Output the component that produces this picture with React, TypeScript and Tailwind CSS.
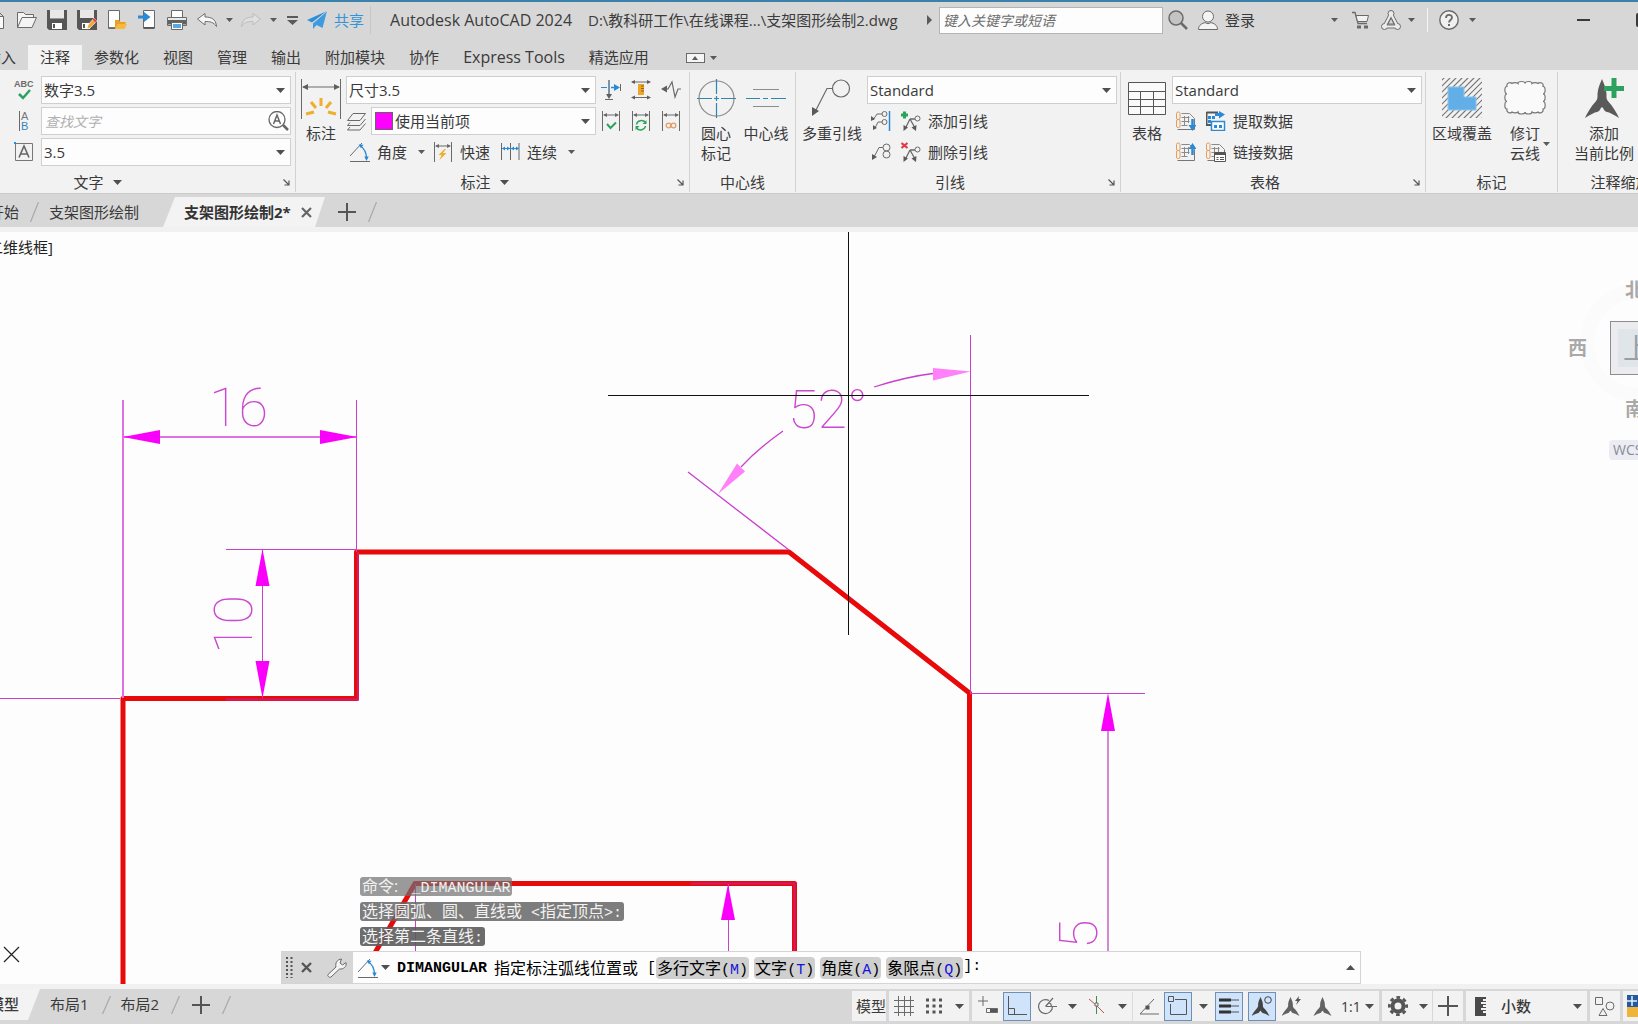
import React from "react";

type Kids = { children?: React.ReactNode };

function Ic({ s = 20, v, children }: Kids & { s?: number; v?: number }) {
  const b = v ?? s;
  return (
    <svg width={s} height={s} viewBox={`0 0 ${b} ${b}`} fill="none" stroke="#6a6a6a" strokeWidth="1" className="shrink-0">
      {children}
    </svg>
  );
}

function Caret({ big }: { big?: boolean }) {
  return big ? (
    <svg width="9" height="5" className="shrink-0"><path d="M0 0h9L4.500 5z" fill="#4f4f4f" /></svg>
  ) : (
    <svg width="7" height="4" className="shrink-0"><path d="M0 0h7L3.500 4z" fill="#5a5a5a" /></svg>
  );
}

function QBtn({ label, w = "w-[30px]", children }: Kids & { label: string; w?: string }) {
  return (
    <button aria-label={label} className={`flex h-6 shrink-0 items-center justify-center ${w}`}>
      {children}
    </button>
  );
}

/* ---------- shared icons ---------- */

const Arrows = () => (
  <>
    <path d="M1.500 0v20M18.500 0v20" />
    <path d="M3 4h14" />
    <path d="M2 4l4-2v4zM18 4l-4-2v4z" fill="#6a6a6a" stroke="none" />
  </>
);

const AngleIcon = () => (
  <Ic>
    <path d="M0 19.500h20M0 14L12 1" />
    <path d="M10 3.500C14 6 16.500 11 16.500 17" stroke="#2b8ad6" strokeWidth="1.300" />
    <path d="M8.500 2.500l5 .3-2.500 3.400zM16.500 19l-2.200-4.500h4.400z" fill="#2b8ad6" stroke="none" />
  </Ic>
);

const Prop = ({ c = "#626262" }: { c?: string }) => (
  <path
    d="M10 0C10.800 2 12.300 4.500 12.500 7.500C12.500 9.500 12.300 10 13.500 11.500C16 14 18 17 19.500 20C16.500 18.300 14.500 17.200 12.300 16.800C11 16.500 10.800 14.500 10 14.500C9.200 14.500 9 16.500 7.700 16.800C5.500 17.200 3.500 18.300 .5 20C2 17 4 14 6.500 11.500C7.700 10 7.500 9.500 7.500 7.500C7.700 4.500 9.200 2 10 0z"
    fill={c}
    stroke="none"
  />
);

const LeaderPair = () => (
  <>
    <path d="M4 18L9 8M9 8l5 9M9 8h5" strokeWidth="1.300" />
    <circle cx="16.500" cy="7.500" r="2.500" />
    <path d="M2.500 20l0-6 4.500 2.500zM15 20l.5-6-5 2.500z" fill="#5a5a5a" stroke="none" />
  </>
);

/* ---------- title bar ---------- */

function TitleBar() {
  return (
    <header className="flex h-[38px] shrink-0 items-center overflow-hidden whitespace-nowrap border-t-2 border-[#3b82aa] pl-0">
      <div className="-ml-[18px] flex shrink-0 items-center">
        <QBtn label="新建"><Ic><path d="M3.500 1.500h8l5 5v12h-13zM11.500 1.500v5h5" fill="#fafafa" /></Ic></QBtn>
        <QBtn label="打开">
          <Ic><path d="M.5 17.500V2.500h6l2 2h8v3M.5 17.500L5 7.500h14.500L15 17.500z" fill="#f4f4f4" /></Ic>
        </QBtn>
        <QBtn label="保存">
          <Ic><path d="M0 0h20v20H2l-2-2z" fill="#565656" stroke="none" /><path d="M3 0h14v8H3z" fill="#e8e8e8" stroke="none" /><path d="M3 8h14v1H3z" fill="#999" stroke="none" /><path d="M5 13h10v6H5z" fill="#fff" stroke="none" /><path d="M6 14h2v4H6z" fill="#565656" stroke="none" /></Ic>
        </QBtn>
        <QBtn label="另存为">
          <Ic><path d="M0 0h20v20H2l-2-2z" fill="#565656" stroke="none" /><path d="M3 0h14v8H3z" fill="#e8e8e8" stroke="none" /><path d="M5 13h8v6H5z" fill="#fff" stroke="none" /><path d="M6 14h2v4H6z" fill="#565656" stroke="none" /><path d="M17 8l3 3-7 7-3 1 1-4z" fill="#f2a93b" stroke="#fff" strokeWidth=".6" /><path d="M17 8l3 3-1.500 1.500-3-3z" fill="#e0435c" stroke="none" /></Ic>
        </QBtn>
        <QBtn label="从 Web 和 Mobile 中打开">
          <Ic><path d="M1.500.5h11v18h-11z" fill="#fdfdfd" /><path d="M2 17h10v1H2z" fill="#777" stroke="none" /><path d="M8 10h4l1.500 2H19l-2.500 7H8z" fill="#e9a21f" stroke="none" /><path d="M8 19l2.500-5H20l-2.500 5z" fill="#f5b941" stroke="none" /></Ic>
        </QBtn>
        <QBtn label="保存到 Web 和 Mobile">
          <Ic><path d="M6.500.5h11v18h-11z" fill="#fdfdfd" /><path d="M7 17h10v1.500H7z" fill="#555" stroke="none" /><path d="M1 7h8" stroke="#2b8ad6" strokeWidth="3" /><path d="M7 2l6.500 5L7 12z" fill="#2b8ad6" stroke="none" /></Ic>
        </QBtn>
        <QBtn label="打印">
          <Ic><path d="M4.500.5h11v7h-11z" fill="#fff" /><path d="M.5 7.500h19v8H.5z" fill="#e9e9e9" /><path d="M1 10h18v4.500H1z" fill="#626262" stroke="none" /><path d="M4.500 12.500h11v7h-11z" fill="#fff" /><path d="M6 14h8v4H6z" fill="#59a9df" stroke="none" /></Ic>
        </QBtn>
        <QBtn label="放弃"><Ic><path d="M.5 9L8 3.500V7c6 0 11 2 11.500 9.500C16.500 12 13 11.500 8 11.500v3.500z" fill="#f6f6f6" stroke="#6e6e6e" /></Ic></QBtn>
        <QBtn label="放弃列表" w="w-[14px]"><Caret /></QBtn>
        <QBtn label="重做"><Ic><path d="M19.500 9L12 3.500V7C6 7 1 9 .5 16.500C3.500 12 7 11.500 12 11.500v3.500z" fill="#dfdfdf" stroke="#bcbcbc" /></Ic></QBtn>
        <QBtn label="重做列表" w="w-[15px]"><Caret /></QBtn>
        <QBtn label="自定义快速访问工具栏" w="w-[22px]">
          <svg width="11" height="9"><path d="M0 0h11v2H0zM0 4h11L5.500 9z" fill="#5a5a5a" /></svg>
        </QBtn>
      </div>
      <button className="ml-[4px] flex shrink-0 items-center gap-[7px] text-[15px] text-[#3594d8]">
        <Ic><path d="M20 1L0 10l5 2.500z" fill="#2f8fd6" stroke="none" /><path d="M20 1L6 13.200V19l3.500-4 6 3z" fill="#3d9bdf" stroke="none" /><path d="M20 1L6 13" stroke="#d7d7d7" strokeWidth=".8" /></Ic>
        共享
      </button>
      <div className="mx-[6px] h-7 w-px shrink-0 bg-[#c6c6c6]" />
      <h1 className="ml-[13px] flex w-[537px] shrink-0 items-center gap-4 text-[16px] text-[#3c3c3c]">
        <span>Autodesk AutoCAD 2024</span>
        <span className="text-[15px]">D:\教科研工作\在线课程...\支架图形绘制2.dwg</span>
      </h1>
      <svg width="5" height="10" className="shrink-0"><path d="M0 0v10l5-5z" fill="#5a5a5a" /></svg>
      <input
        aria-label="搜索"
        placeholder="键入关键字或短语"
        className="ml-[7px] h-[27px] w-[224px] shrink-0 border border-[#b4b4b4] bg-[#fdfdfd] px-[3px] text-[14px] italic outline-none placeholder:text-[#6d6d6d]"
      />
      <QBtn label="搜索按钮">
        <Ic><circle cx="8" cy="8" r="7" fill="#c4c4c4" strokeWidth="1.500" /><path d="M13 13l6 6" strokeWidth="2.500" /></Ic>
      </QBtn>
      <button className="flex shrink-0 items-center gap-[7px] pl-[5px] text-[15px]">
        <Ic><circle cx="10" cy="6.500" r="5.500" fill="#f4f4f4" /><path d="M.5 19.500c0-5 4-6 6.500-7 2 1.500 4 1.500 6 0 2.500 1 6.500 2 6.500 7z" fill="#f4f4f4" /></Ic>
        登录
      </button>
      <QBtn label="登录选项" w="ml-[67px] w-[24px]"><Caret /></QBtn>
      <QBtn label="购物车" w="w-[30px]">
        <Ic s={18} v={18}><path d="M0 1.500h3l3 11h9" strokeWidth="1.300" /><path d="M4 4.500h12.500L15 10.500H5.500z" fill="#f2f2f2" /><path d="M5 14.500h4v3H5zM12 14.500h4v3h-4z" fill="#6a6a6a" stroke="none" /></Ic>
      </QBtn>
      <QBtn label="Autodesk App Store" w="w-[30px]">
        <Ic>
          <path d="M10 4L3.500 16.500h13z" stroke="#707070" strokeWidth="4" strokeLinejoin="round" />
          <circle cx="10" cy="3.500" r="3" fill="#ececec" />
          <circle cx="3.500" cy="16.500" r="3" fill="#ececec" />
          <circle cx="16.500" cy="16.500" r="3" fill="#ececec" />
          <path d="M10 4L3.500 16.500h13z" stroke="#ececec" strokeWidth="2.200" strokeLinejoin="round" />
          <path d="M10 8L7 14h6z" fill="#d7d7d7" />
        </Ic>
      </QBtn>
      <QBtn label="应用选项" w="w-[10px]"><Caret /></QBtn>
      <div className="mr-[3px] ml-[11px] h-6 w-px shrink-0 bg-[#f4f4f4]" />
      <QBtn label="帮助" w="w-[36px]">
        <Ic><circle cx="10" cy="10" r="9.200" fill="#f0f0f0" strokeWidth="1.400" /><path d="M7 8c0-4 6-4 6-.5 0 2.500-3 2.500-3 5" strokeWidth="1.800" /><path d="M9 14h2v2H9z" fill="#6a6a6a" stroke="none" /></Ic>
      </QBtn>
      <QBtn label="帮助选项" w="w-[10px]"><Caret /></QBtn>
      <QBtn label="最小化" w="ml-auto w-[40px]"><span className="h-[2px] w-[13px] bg-[#3a3a3a]" /></QBtn>
      <QBtn label="最大化" w="-mr-[12px] ml-[27px] w-[20px]">
        <span className="ml-[5px] size-[14px] rounded-[2px] border-2 border-[#3a3a3a]" />
      </QBtn>
    </header>
  );
}

/* ---------- ribbon tabs ---------- */

function RibbonTabs() {
  const tabs = ["插入", "注释", "参数化", "视图", "管理", "输出", "附加模块", "协作", "Express Tools", "精选应用"];
  const style = (t: string) => {
    if (t === "注释") return "bg-[#f3f3f3] text-[15px]";
    if (t === "Express Tools") return "text-[16px]";
    return "text-[15px]";
  };
  return (
    <nav className="mt-[7px] flex h-[25px] shrink-0 items-stretch overflow-hidden">
      <div className="-ml-[26px] flex shrink-0">
        {tabs.map((t) => (
          <button key={t} className={`px-3 leading-[25px] whitespace-nowrap ${style(t)}`}>
            {t}
          </button>
        ))}
      </div>
      <button aria-label="最小化功能区" className="ml-[25px] flex items-center gap-[5px]">
        <span className="flex h-[10px] w-[19px] items-center justify-center border border-[#6a6a6a] bg-[#f5f5f5]">
          <svg width="6" height="4"><path d="M0 4h6L3 0z" fill="#5a5a5a" /></svg>
        </span>
        <Caret />
      </button>
    </nav>
  );
}

/* ---------- ribbon ---------- */

function Panel({ title, caret, launcher, w, children }: Kids & { title: string; caret?: boolean; launcher?: boolean; w: string }) {
  return (
    <section className={`flex shrink-0 flex-col border-r border-[#d2d2d2] ${w}`}>
      <div className="flex h-[100px] pt-1">{children}</div>
      <div className="flex h-5 items-center">
        <button className="flex flex-1 items-center justify-center gap-[9px] text-[15px] leading-5 whitespace-nowrap">
          {title}
          {caret && <Caret big />}
        </button>
        {launcher && (
          <button aria-label={`${title}设置`} className="flex w-4 justify-center pr-[2px]">
            <Ic s={7}><path d="M.5.5l5 5M6 1.500V6H1.500" stroke="#555" strokeWidth="1.200" /></Ic>
          </button>
        )}
      </div>
    </section>
  );
}

function Combo({ label, value, swatch, w = "w-[250px]" }: { label: string; value: string; swatch?: boolean; w?: string }) {
  return (
    <div className={`relative flex h-7 shrink-0 items-center border border-[#cfcfcf] bg-[#fdfdfd] ${w}`}>
      {swatch && <span className="ml-[3px] size-[18px] shrink-0 border border-[#666] bg-[#ff00ff]" />}
      <select aria-label={label} className="h-full min-w-0 flex-1 appearance-none bg-transparent pl-[2px] text-[15px] text-[#3a3a3a] outline-none">
        <option>{value}</option>
      </select>
      <span className="pointer-events-none absolute right-[5px]"><Caret big /></span>
    </div>
  );
}

function Big({ label, w, children }: Kids & { label: React.ReactNode; w: string }) {
  return (
    <button className={`flex shrink-0 flex-col items-center justify-start gap-[4px] pt-[1px] text-center text-[15px] leading-5 whitespace-nowrap ${w}`}>
      <span className="flex h-[42px] items-center">{children}</span>
      <span>{label}</span>
    </button>
  );
}

function Small({ label, text, children }: Kids & { label?: string; text?: string }) {
  return (
    <button aria-label={label} className="flex h-7 shrink-0 items-center gap-[7px] whitespace-nowrap text-[15px]">
      {children}
      {text}
    </button>
  );
}

function TextPanel() {
  return (
    <Panel title="文字" caret launcher w="-ml-[84px] w-[380px]">
      <div className="ml-auto grid grid-cols-[24px_250px] gap-x-[6px] gap-y-[3px] self-start pr-[4px]">
        <Small label="拼写检查">
          <svg width="20" height="20" viewBox="0 0 20 20" fill="none" className="ml-[3px]">
            <text x="0" y="7" fontSize="9" fontWeight="700" fontFamily="Liberation Sans, sans-serif" fill="#6a6a6a">ABC</text>
            <path d="M5 14l4 4 7-8" stroke="#2ba35e" strokeWidth="2.500" />
          </svg>
        </Small>
        <Combo label="文字样式" value="数字3.5" />
        <Small label="对齐文字">
          <svg width="20" height="20" viewBox="0 0 20 20" className="ml-[3px]">
            <path d="M5.500 0v20" stroke="#6a6a6a" />
            <text x="7" y="9" fontSize="11" fontFamily="Liberation Sans, sans-serif" fill="#777">A</text>
            <text x="7" y="19" fontSize="11" fontFamily="Liberation Sans, sans-serif" fill="#3584bd">B</text>
          </svg>
        </Small>
        <div className="flex h-7 items-center border border-[#cfcfcf] bg-[#fdfdfd]">
          <input aria-label="查找文字" placeholder="查找文字" className="min-w-0 flex-1 bg-transparent pl-[3px] text-[14px] italic outline-none placeholder:text-[#b0b0b0]" />
          <button aria-label="查找" className="mr-[1px]">
            <svg width="21" height="20" viewBox="0 0 21 20" fill="none" stroke="#666">
              <circle cx="9" cy="8.500" r="8" strokeWidth="1.300" />
              <path d="M15 14l5 5" strokeWidth="2.500" />
              <path d="M5.500 13L9 4l3.500 9M7 10h4" strokeWidth="1.500" />
            </svg>
          </button>
        </div>
        <Small label="文字高度">
          <svg width="20" height="20" viewBox="0 0 20 20" fill="none" stroke="#777" className="ml-[3px]">
            <path d="M1.500 1.500h17v17h-17z" />
            <path d="M5 15.500L10 4l5 11.500M6.500 12h7" stroke="#666" strokeWidth="1.600" />
            <path d="M0 0h2v2H0z" fill="#2b8ad6" stroke="none" />
          </svg>
        </Small>
        <Combo label="高度" value="3.5" />
      </div>
    </Panel>
  );
}

function DimPanel() {
  return (
    <Panel title="标注" caret launcher w="w-[394px]">
      <Big label="标注" w="ml-[4px] w-[42px]">
        <Ic s={42}>
          <path d="M1.500 2v40M40.500 2v40M3 10h36" />
          <path d="M2 10l6-3v6zM40 10l-6-3v6z" fill="#5f5f5f" stroke="none" />
          <g stroke="#eeae30" strokeWidth="3">
            <path d="M21 21v8M11 25l5 6M31 25l-5 6M6 37l8-2M36 37l-8-2" />
          </g>
        </Ic>
      </Big>
      <div className="ml-[4px] flex flex-col gap-[3px]">
        <div className="flex items-center gap-[5px]">
          <Combo label="标注样式" value="尺寸3.5" />
          <div className="flex gap-[10px]">
            <Small label="标注打断">
              <Ic><path d="M0 7.500h6M8 0v16" stroke="#2b8ad6" /><path d="M8 0v16M4 19.500h8M19.500 4v7" /><path d="M10 7.500h6" stroke="#2b8ad6" strokeWidth="1.500" /><path d="M19 7.500L13 4v7z" fill="#2b8ad6" stroke="none" /><path d="M8 19l-3-5h6z" fill="#5f5f5f" stroke="none" /></Ic>
            </Small>
            <Small label="调整间距">
              <Ic><path d="M1 2h18M1 17.500h18" /><path d="M0 2l4-2v4zM20 2l-4-2v4zM0 17.500l4-2v4zM20 17.500l-4-2v4z" fill="#5f5f5f" stroke="none" /><path d="M7 4h6v11H7z" fill="#eda52a" stroke="none" /><path d="M10 6h3M10 8.500h3M10 11h3" stroke="#8d6417" /></Ic>
            </Small>
            <Small label="折弯标注">
              <Ic><path d="M2 9h5l4-7 3 15 3-8h3" strokeWidth="1.200" /><path d="M0 9l6-3.500v7z" fill="#5f5f5f" stroke="none" /></Ic>
            </Small>
          </div>
        </div>
        <div className="flex items-center gap-[5px]">
          <div className="flex items-center gap-[4px]">
            <Small label="图层">
              <Ic s={21} v={21}><path d="M1.500 9.500L7 2.500h12.500l-5.500 7zM19.500 8l-5.500 6.500H1.500l2.500-3M19.500 12.500L14 19H1.500l2.500-3" /></Ic>
            </Small>
            <Combo label="标注图层" value="使用当前项" swatch w="w-[225px]" />
          </div>
          <div className="flex gap-[10px]">
            <Small label="检验"><Ic><Arrows /><path d="M6 13l3.500 4L15 11.500" stroke="#2ba35e" strokeWidth="2" /></Ic></Small>
            <Small label="更新"><Ic><Arrows /><path d="M5.500 13.500a5 4.500 0 0 1 9-2M14.500 15a5 4.500 0 0 1-9 2" stroke="#2ba35e" strokeWidth="1.500" /><path d="M15.500 9v4h-4zM4.500 19v-4h4z" fill="#2ba35e" stroke="none" /></Ic></Small>
            <Small label="重新关联"><Ic><Arrows /><circle cx="7.500" cy="14.500" r="2.300" stroke="#e39c6c" strokeWidth="1.300" /><circle cx="12.500" cy="14.500" r="2.300" stroke="#e39c6c" strokeWidth="1.300" /></Ic></Small>
          </div>
        </div>
        <div className="flex items-center pl-[4px]">
          <Small text="角度"><AngleIcon /></Small>
          <span className="mr-[8px] ml-[11px]"><Caret /></span>
          <Small text="快速"><Ic><Arrows /><path d="M11.500 7L5.500 13h3l-2 5 7-7h-3.500l3-4z" fill="#eeae30" stroke="none" /></Ic></Small>
          <span className="w-[10px]" />
          <Small text="连续"><Ic><path d="M1.500 1v17M10.500 1v17M19 1v17" stroke="#666" /><path d="M2 6.500h17" stroke="#2b8ad6" /><path d="M2 6.500l3-2v4zM10 6.500l-3-2v4zM11 6.500l3-2v4zM19 6.500l-3-2v4z" fill="#2b8ad6" stroke="none" /></Ic></Small>
          <span className="ml-[11px]"><Caret /></span>
        </div>
      </div>
    </Panel>
  );
}

function CenterPanel() {
  return (
    <Panel title="中心线" w="w-[106px]">
      <Big w="ml-[3px] w-[46px]" label={<>圆心<br />标记</>}>
        <Ic s={39} v={39}>
          <circle cx="19.500" cy="19.500" r="17.500" stroke="#8c8c8c" strokeWidth="1.200" />
          <path d="M19.500 0v15M19.500 17v5M19.500 24v15M0 19.500h15M17 19.500h5M24 19.500h15" stroke="#2f87ad" strokeWidth="1.200" />
        </Ic>
      </Big>
      <Big w="ml-[2px] w-[50px]" label="中心线">
        <Ic s={40} v={40}>
          <path d="M7 11.500h26M7 28.500h26" stroke="#8c8c8c" />
          <path d="M0 20.500h14M17 20.500h5M25 20.500h15" stroke="#2f87ad" />
        </Ic>
      </Big>
    </Panel>
  );
}

function LeaderPanel() {
  return (
    <Panel title="引线" launcher w="w-[325px]">
      <Big label="多重引线" w="ml-[4px] w-[64px]">
        <Ic s={40} v={40}>
          <circle cx="29" cy="10.500" r="8.500" strokeWidth="1.200" />
          <path d="M20.500 10.500H15L3 34" strokeWidth="1.200" />
          <path d="M0 38V29l7 4z" fill="#5a5a5a" stroke="none" />
        </Ic>
      </Big>
      <div className="ml-[3px] flex flex-col gap-[3px]">
        <Combo label="多重引线样式" value="Standard" />
        <div className="flex gap-[10px] pl-[4px]">
          <Small label="对齐引线">
            <Ic><circle cx="13.500" cy="3" r="2.500" /><circle cx="13.500" cy="11" r="2.500" /><path d="M11 3H6L2 9M11 11H7L4 17M18.500 0v20" /><path d="M18.500 0v20" stroke="#2b8ad6" strokeWidth="1.500" /><path d="M0 10V5l4 3zM2 19v-5l4 3z" fill="#5a5a5a" stroke="none" /></Ic>
          </Small>
          <Small text="添加引线"><Ic><LeaderPair /><path d="M0 4h7M3.500 .5v7" stroke="#2ba35e" strokeWidth="3" /></Ic></Small>
        </div>
        <div className="flex gap-[10px] pl-[4px]">
          <Small label="合并引线">
            <Ic><circle cx="15.500" cy="5.500" r="3.500" /><circle cx="15.500" cy="12.500" r="3.500" /><path d="M12 5.500H8L3 15" /><path d="M1 18v-6l5 3z" fill="#5a5a5a" stroke="none" /></Ic>
          </Small>
          <Small text="删除引线"><Ic><LeaderPair /><path d="M.5 1l6 5M6.500 1l-6 5" stroke="#df3a4b" strokeWidth="2.200" /></Ic></Small>
        </div>
      </div>
    </Panel>
  );
}

const Sheet = () => (
  <>
    <rect x=".5" y="1" width="3.500" height="7.500" rx="1.500" stroke="#e39c5c" />
    <rect x=".5" y="8.500" width="3.500" height="8" rx="1.500" stroke="#e39c5c" />
    <path d="M5.500 2.500h8l5 5M5.500 6.500h8M5.500 10.500h8M5.500 14.500h6M8.500 5v10M12.500 5v7" stroke="#8a8a8a" />
    <path d="M1.500 18.500h17M18.500 7.500v11" stroke="#777" />
  </>
);

function TablePanel() {
  return (
    <Panel title="表格" launcher w="w-[305px]">
      <Big label="表格" w="ml-[5px] w-[42px]">
        <Ic s={40} v={40}>
          <path d="M1.500 4.500h37v32h-37z" fill="#fafafa" stroke="#555" />
          <path d="M1.500 13.500h37M1.500 21.500h37M1.500 28.500h37M13.500 13.500v23M26.500 13.500v23" stroke="#555" />
        </Ic>
      </Big>
      <div className="ml-[4px] flex flex-col gap-[3px]">
        <Combo label="表格样式" value="Standard" />
        <div className="flex gap-[10px] pl-[4px]">
          <Small label="从源下载"><Ic><Sheet /><path d="M16.500 8v8" stroke="#2b8ad6" strokeWidth="2.500" /><path d="M12.500 14h8l-4 6z" fill="#2b8ad6" stroke="none" /></Ic></Small>
          <Small text="提取数据">
            <Ic><path d="M.5 1v13h5M.5 1.500H12" stroke="#555" strokeWidth="2" /><path d="M2 6.500h3M6 6.500h3M2 10.500h3" stroke="#2b8ad6" strokeWidth="3" /><path d="M9 3.500h5" stroke="#2b8ad6" strokeWidth="3" /><path d="M13 0l6 3.500-6 4z" fill="#2b8ad6" stroke="none" /><path d="M5.500 10.500h13v9h-13z" fill="#fff" stroke="#2b8ad6" strokeWidth="1.500" /><path d="M8 15.500h3M13 15.500h3" stroke="#2b8ad6" strokeWidth="3" /></Ic>
          </Small>
        </div>
        <div className="flex gap-[10px] pl-[4px]">
          <Small label="上载到源"><Ic><Sheet /><path d="M16.500 5v8" stroke="#2b8ad6" strokeWidth="2.500" /><path d="M12.500 7h8l-4-6z" fill="#2b8ad6" stroke="none" /></Ic></Small>
          <Small text="链接数据"><Ic><Sheet /><path d="M8.500 10.500h11v9h-11z" fill="#fff" stroke="#555" /><path d="M8.500 12h11" stroke="#555" strokeWidth="2" /><path d="M10.500 15.500h2M14 15.500h4M10.500 17.500h2M14 17.500h4" stroke="#555" /></Ic></Small>
        </div>
      </div>
    </Panel>
  );
}

function MarkPanel() {
  const hatch = Array.from({ length: 16 }, (_, i) => `M${i * 6 - 44} 42l44-44`).join("");
  return (
    <Panel title="标记" w="w-[132px]">
      <Big label="区域覆盖" w="ml-[5px] w-[62px]">
        <Ic s={42} v={42}>
          <clipPath id="wipe"><path d="M1 1h40v40H1z" /></clipPath>
          <path d={hatch} clipPath="url(#wipe)" stroke="#777" strokeWidth="1.200" />
          <path d="M7 10h16v10h12v13H7z" fill="#62aee6" stroke="#8ec5ee" />
        </Ic>
      </Big>
      <div className="relative ml-[9px]">
        <Big w="w-[46px]" label={<>修订<br />云线</>}>
          <Ic s={42} v={42}>
            <path
              d="M3 9.500a3 3 0 0 1 5-3a3.500 2 0 0 1 6 0a3.500 2 0 0 1 7 0a3.500 2 0 0 1 7 0a3.500 2 0 0 1 6 0a3 3 0 0 1 5 3a2 3.500 0 0 1 0 7.500a2 3.500 0 0 1 0 7.500a2 3.500 0 0 1 0 7.500a3 3 0 0 1-5 3a3.500 2 0 0 1-6 0a3.500 2 0 0 1-7 0a3.500 2 0 0 1-7 0a3.500 2 0 0 1-6 0a3 3 0 0 1-5-3a2 3.500 0 0 1 0-7.500a2 3.500 0 0 1 0-7.500a2 3.500 0 0 1 0-7.500z"
              fill="#fafafa"
              stroke="#777"
              strokeWidth="1.200"
            />
          </Ic>
        </Big>
        <span className="absolute top-[66px] left-[41px]"><Caret /></span>
      </div>
    </Panel>
  );
}

function ScalePanel() {
  return (
    <Panel title="注释缩放" w="w-[126px]">
      <Big w="ml-[14px] w-[64px]" label={<>添加<br />当前比例</>}>
        <Ic s={42} v={42}>
          <g transform="translate(1 2) scale(1.800 1.950)"><Prop c="#5a5a5a" /></g>
          <path d="M21 11.500h20M31 1v20" stroke="#2ba35e" strokeWidth="5" />
        </Ic>
      </Big>
    </Panel>
  );
}

function Ribbon() {
  return (
    <div className="flex shrink-0 overflow-hidden border-b border-[#cccccc] bg-[#f2f2f2] pt-[2px] pb-px">
      <TextPanel />
      <DimPanel />
      <CenterPanel />
      <LeaderPanel />
      <TablePanel />
      <MarkPanel />
      <ScalePanel />
    </div>
  );
}

/* ---------- file tabs ---------- */

const Slash = ({ h = 18 }: { h?: number }) => (
  <svg width="9" height={h} className="shrink-0"><path d={`M.5 ${h}L8.500 0`} stroke="#a8a8a8" strokeWidth="1.200" /></svg>
);

function FileTabs() {
  return (
    <nav className="flex h-[33px] shrink-0 items-end overflow-hidden whitespace-nowrap text-[15px]">
      <div className="-ml-[11px] flex h-[30px] shrink-0 items-center">
        <button className="w-[30px]">开始</button>
        <span className="ml-[11px] flex"><Slash h={20} /></span>
        <button className="ml-[10px]">支架图形绘制</button>
      </div>
      <div className="ml-[24px] flex h-[30px] w-[162px] shrink-0 items-center bg-[#f3f3f3] pl-[21px] [clip-path:polygon(12px_0,100%_0,152px_100%,0_100%)]">
        <button className="w-[107px] text-left font-bold text-[#333]">支架图形绘制2*</button>
        <button aria-label="关闭" className="ml-[10px]">
          <Ic s={11}><path d="M1 1l9 9M10 1L1 10" stroke="#666" strokeWidth="2.200" /></Ic>
        </button>
      </div>
      <div className="ml-[13px] flex h-[30px] items-center gap-[12px]">
        <button aria-label="新图形"><Ic s={18}><path d="M9 0v18M0 9h18" stroke="#555" strokeWidth="2" /></Ic></button>
        <Slash h={20} />
      </div>
    </nav>
  );
}

/* ---------- drawing area ---------- */

const dimText = { fontFamily: "Roboto, sans-serif", fontWeight: 100, fontSize: 54 };

function Drawing() {
  return (
    <svg width="1638" height="752" viewBox="0 232 1638 752" fill="none" className="absolute top-0 left-0">
      <g stroke="#e80a0a" strokeWidth="5">
        <path d="M123 984V698.500H356.500V552H789L969.500 693V984" strokeLinejoin="round" />
        <path d="M372 958L415 883.500H794.500V984" strokeLinejoin="round" />
      </g>
      <g stroke="#d21a6a" strokeWidth="2">
        <path d="M226 699.500H358V552M691 883.500H794.500V984" />
      </g>
      <g stroke="#e070e4" strokeWidth="2">
        <path d="M123 400V698M123 437H357" />
      </g>
      <g stroke="#c840cc" strokeWidth="1">
        <path d="M356.500 400V552M226 549.500H357M262.500 549V698M0 698.500H120" />
        <path d="M970.500 335V693M970 693.500H1145M728.500 884V984M415.500 884V984" />
        <path d="M688 472L789 550M783 431C766 443 752 455 741 467M874 387C893 381 912 376 933 373.500" strokeWidth="1.300" />
      </g>
      <path d="M1108 700V984" stroke="#d08ad8" strokeWidth="2" />
      <g fill="#fa00fa">
        <path d="M123 437l37-7v14zM357 437l-37-7v14zM262.500 549l-7 37h14zM262.500 698l-7-37h14zM1108 693l-7 38h14zM728 884l-7 36h14z" />
      </g>
      <g fill="#ff80f8">
        <path d="M718 494L737 463.500L745 471.500zM970.500 371.500L933 368V380.500z" />
      </g>
      <g fill="#cc48d0" {...dimText}>
        <text x="209" y="426">16</text>
        <text x="788" y="428">52°</text>
        <text transform="translate(252 654) rotate(-90)">10</text>
        <text transform="translate(1097 949) rotate(-90)">5</text>
      </g>
      <path d="M848.500 232V635M608 395.500H1089" stroke="#111" />
      <path d="M4 947l15 15M19 947L4 962" stroke="#222" strokeWidth="1.200" />
    </svg>
  );
}

function ViewCube() {
  return (
    <div className="absolute top-[47px] -right-[51px] w-[121px] text-[19px] font-bold text-[#a9a9a9]">
      <div className="absolute top-[5px] left-[12px] size-[118px] rounded-full border-[14px] border-[#fbfbfb]" />
      <div className="relative flex flex-col">
        <span className="ml-[57px] leading-[22px]">北</span>
        <div className="mt-[20px] flex items-center">
          <span className="w-[42px]">西</span>
          <button className="size-[54px] border border-[#8d8d8d] bg-[#ececee] text-[28px] leading-[44px] font-normal text-[#9a9fa6]">
            <span className="bg-[#e0e5ea] px-[5px]">上</span>
          </button>
        </div>
        <span className="mt-[23px] ml-[57px] leading-[22px]">南</span>
        <button className="mt-[20px] ml-[41px] rounded bg-[#ececf4] px-1 text-left text-[14px] leading-[20px] font-normal text-[#8b8b95]">WCS</button>
      </div>
    </div>
  );
}

const L = ({ children }: Kids) => <span className="font-['Liberation_Mono','Noto_Sans_CJK_SC',monospace] text-[15px]">{children}</span>;

function Option({ text, k }: { text: string; k: string }) {
  return (
    <button className="h-[22px] rounded-[4px] bg-[#cfcfcf] px-px leading-[22px]">
      {text}<L>(<span className="text-[#1515d8]">{k}</span>)</L>
    </button>
  );
}

function CommandLine() {
  const history: React.ReactNode[] = [
    <>命令: <L>&nbsp;_DIMANGULAR</L></>,
    <>选择圆弧、圆、直线或<L>&nbsp;&lt;</L>指定顶点<L>&gt;:</L></>,
    <>选择第二条直线<L>:</L></>,
  ];
  const shade = ["bg-[#6f6f6f]/70", "bg-[#666]/85", "bg-[#5c5c5c]/90"];
  return (
    <div className="absolute bottom-0 left-[281px] w-[1080px] whitespace-nowrap text-[16px]">
      <div className="mb-[5px] ml-[79px] flex flex-col items-start gap-[6px] text-[#f2f2f2]">
        {history.map((h, i) => (
          <div key={i} className={`h-[19px] rounded-[3px] px-[2px] leading-[19px] ${shade[i]}`}>{h}</div>
        ))}
      </div>
      <div className="flex h-[33px] items-center border border-[#d4d4d4] bg-[#fdfdfd] text-black">
        <div className="flex h-full w-[71px] shrink-0 items-center bg-[#d6d6d6] pl-[4px]">
          <svg width="7" height="21"><path d="M1 0v21M5.500 0v21" stroke="#555" strokeWidth="2" strokeDasharray="2 2" /></svg>
          <button aria-label="关闭命令行" className="ml-[8px]"><Ic s={11}><path d="M1 1l9 9M10 1L1 10" stroke="#555" strokeWidth="2.400" /></Ic></button>
          <button aria-label="自定义" className="ml-[15px]">
            <Ic><path d="M1 16.500L9 9C8 5 10 1.500 14.500 1l-1.500 4 2.500 2 3.500-2.500c1 4-2.500 7-6.500 6.500L4 19c-1.500 1-4-1-3-2.500z" fill="#f4f4f4" /></Ic>
          </button>
        </div>
        <button aria-label="最近使用的命令" className="ml-[5px] flex items-center gap-[3px]"><AngleIcon /><Caret big /></button>
        <div className="ml-[7px] flex items-center">
          <span className="font-bold"><L>DIMANGULAR</L></span>
          <span className="ml-[7px]">指定标注弧线位置或</span>
          <span className="ml-[9px]"><L>[</L></span>
        </div>
        <div className="flex gap-[5px]">
          <Option text="多行文字" k="M" />
          <Option text="文字" k="T" />
          <Option text="角度" k="A" />
          <Option text="象限点" k="Q" />
        </div>
        <L>]:</L>
        <input aria-label="命令输入" className="min-w-0 flex-1 bg-transparent outline-none" />
        <button aria-label="命令历史" className="mr-[5px]"><svg width="9" height="5"><path d="M0 5h9L4.500 0z" fill="#4f4f4f" /></svg></button>
      </div>
    </div>
  );
}

/* ---------- status bar ---------- */

function SBtn({ label, on, w = "w-[28px]", children }: Kids & { label: string; on?: boolean; w?: string }) {
  return (
    <button
      aria-label={label}
      aria-pressed={on}
      className={`flex h-[29px] shrink-0 items-center justify-center ${w} ${on ? "border border-[#6f8fb5] bg-[#cfe3fb]" : ""}`}
    >
      {children}
    </button>
  );
}

const Group = ({ w = "", children }: Kids & { w?: string }) => (
  <div className={`flex h-[30px] shrink-0 items-center bg-[#f2f2f2] ${w}`}>{children}</div>
);

function StatusBar() {
  return (
    <footer className="flex shrink-0 items-start overflow-hidden border-t-[5px] border-[#f1f1f1] whitespace-nowrap text-[15px]">
      <div className="-ml-[18px] flex h-[35px] shrink-0 items-start">
        <button className="h-[31px] w-[58px] bg-[#f3f3f3] pl-[7px] text-left font-medium [clip-path:polygon(0_0,100%_0,46px_100%,0_100%)]">模型</button>
        <div className="flex h-[31px] items-center">
          <button className="ml-[10px]">布局1</button>
          <span className="ml-[13px] flex"><Slash /></span>
          <button className="ml-[10px]">布局2</button>
          <span className="ml-[12px] flex"><Slash /></span>
          <button aria-label="新建布局" className="ml-[12px]"><Ic s={18}><path d="M9 0v18M0 9h18" stroke="#555" strokeWidth="2" /></Ic></button>
          <span className="ml-[12px] flex"><Slash /></span>
        </div>
      </div>
      <div className="mt-[2px] -mr-[15px] ml-auto flex shrink-0 gap-[3px]">
        <Group w="w-[34px] justify-end"><button>模型</button></Group>
        <Group w="w-[80px]">
          <SBtn label="栅格" w="w-[30px]"><Ic><path d="M4.500 0v20M10.500 0v20M16.500 0v20M0 4.500h20M0 10.500h20M0 16.500h20" /></Ic></SBtn>
          <SBtn label="捕捉" w="w-[30px]"><Ic s={16}><path d="M0 2h16M0 8h16M0 14h16" stroke="#555" strokeWidth="3" strokeDasharray="3 3.500" /></Ic></SBtn>
          <SBtn label="捕捉选项" w="w-[20px]"><Caret big /></SBtn>
        </Group>
        <Group w="w-[407px]">
          <SBtn label="动态输入" w="w-[31px]"><Ic><path d="M5 0v10M0 5h10" /><path d="M8.500 12.500h11v4h-11z" fill="#555" /><path d="M9 13h3v3H9z" fill="#f4f4f4" stroke="none" /></Ic></SBtn>
          <SBtn label="正交" on><Ic><path d="M1.500 0v18.500H20M1.500 12.500h6v6" stroke="#555" /></Ic></SBtn>
          <SBtn label="极轴追踪" w="w-[32px]"><Ic><path d="M15.500 10.500A7 7 0 1 1 12 4.500M8.500 10.500L16 2M8.500 10.500H20M12 6.500c2 1 2.500 2 2.500 4" strokeWidth="1.200" /></Ic></SBtn>
          <SBtn label="极轴选项" w="w-[18px]"><Caret big /></SBtn>
          <SBtn label="等轴测" w="w-[32px]"><Ic><path d="M9.500 0v18" stroke="#3f8a57" /><path d="M2 3l7 6" stroke="#c05050" /><path d="M9 9l8 8" stroke="#c05050" /><path d="M8 7h3v3H8z" fill="#f4f4f4" /></Ic></SBtn>
          <SBtn label="等轴测选项" w="w-[19px]"><Caret big /></SBtn>
          <SBtn label="对象捕捉追踪" w="w-[32px] border-l border-[#dcdcdc]"><Ic><path d="M15 3L1 18h19" /><path d="M6.500 9.500h4v4h-4z" fill="#555" stroke="none" /></Ic></SBtn>
          <SBtn label="对象捕捉" on><Ic><path d="M7 3.500h11.500v15h-16V8" stroke="#555" /><path d="M.5.5h5v5h-5z" stroke="#555" /></Ic></SBtn>
          <SBtn label="对象捕捉选项" w="w-[23px]"><Caret big /></SBtn>
          <SBtn label="线宽" on><Ic><path d="M0 4h20M0 10h20M0 16h20" stroke="#555" /><path d="M0 4h12M0 10h12M0 16h12" stroke="#333" strokeWidth="3" /></Ic></SBtn>
          <SBtn label="注释可见性" on w="ml-[5px] w-[28px]"><Ic><g transform="translate(-1 1) scale(.95)"><Prop c="#444" /></g><circle cx="16" cy="4" r="3.300" stroke="#444" /></Ic></SBtn>
          <SBtn label="自动缩放" w="w-[32px]"><Ic><g transform="translate(-1 1) scale(.95)"><Prop /></g><path d="M17 0l-4 5h2.500L14 9l5-6h-2.500z" fill="#555" stroke="none" /></Ic></SBtn>
          <SBtn label="注释比例" w="w-[28px]"><Ic><g transform="translate(1 1) scale(.95)"><Prop /></g></Ic></SBtn>
          <button className="ml-[5px] flex shrink-0 items-center gap-[4px] text-[14px]">1:1<Caret big /></button>
        </Group>
        <div className="flex gap-px">
          <Group w="w-[50px]">
            <SBtn label="切换工作空间" w="w-[32px]">
              <Ic><circle cx="10" cy="10" r="5.500" stroke="#555" strokeWidth="4" /><circle cx="10" cy="10" r="8.600" stroke="#555" strokeWidth="2.800" strokeDasharray="3.600 3.154" strokeDashoffset="1.800" /></Ic>
            </SBtn>
            <SBtn label="工作空间选项" w="w-[18px]"><Caret big /></SBtn>
          </Group>
          <Group w="w-[30px] justify-center"><SBtn label="注释监视器"><Ic><path d="M10 0v20M0 10h20" stroke="#555" strokeWidth="2" /></Ic></SBtn></Group>
        </div>
        <Group w="w-[121px] pr-[5px] pl-[9px]">
          <svg width="11" height="19"><path d="M0 0h11v2H8v2h3v1H6v2h5v1H8v2h3v1H6v2h5v1H8v2h3v3H0z" fill="#4a4a4a" /></svg>
          <div className="relative ml-[15px] flex flex-1 items-center">
            <select aria-label="单位" className="w-full appearance-none bg-transparent font-medium outline-none"><option>小数</option></select>
            <span className="pointer-events-none absolute right-0"><Caret big /></span>
          </div>
        </Group>
        <Group w="w-[30px] justify-center">
          <SBtn label="隔离对象"><Ic><path d="M.5 1.500h7v7h-7z" /><circle cx="15" cy="10" r="4" /><path d="M8 12.500l-4 7h8z" /></Ic></SBtn>
        </Group>
        <Group w="w-[30px] justify-center">
          <SBtn label="图形性能"><Ic s={22} v={22}><path d="M0 0h22v12H0z" fill="#245b9c" stroke="none" /><path d="M0 12h22v10H0z" fill="#f0b43a" stroke="none" /><path d="M5 1v10M0 6h10" stroke="#e8f2fb" strokeWidth="1.500" /></Ic></SBtn>
        </Group>
      </div>
    </footer>
  );
}

export default function App() {
  return (
    <div className="flex h-screen flex-col overflow-hidden bg-[#d7d7d7] font-['Open_Sans','Noto_Sans_CJK_SC',sans-serif] text-[#3a3a3a]">
      <TitleBar />
      <RibbonTabs />
      <Ribbon />
      <FileTabs />
      <main className="relative min-h-0 flex-1 overflow-hidden border-t-[5px] border-[#f1f1f1] bg-[#fdfdfd]">
        <Drawing />
        <button className="absolute top-[4px] -left-[12px] text-[15px] whitespace-nowrap text-[#222]">二维线框]</button>
        <ViewCube />
        <CommandLine />
      </main>
      <StatusBar />
    </div>
  );
}
